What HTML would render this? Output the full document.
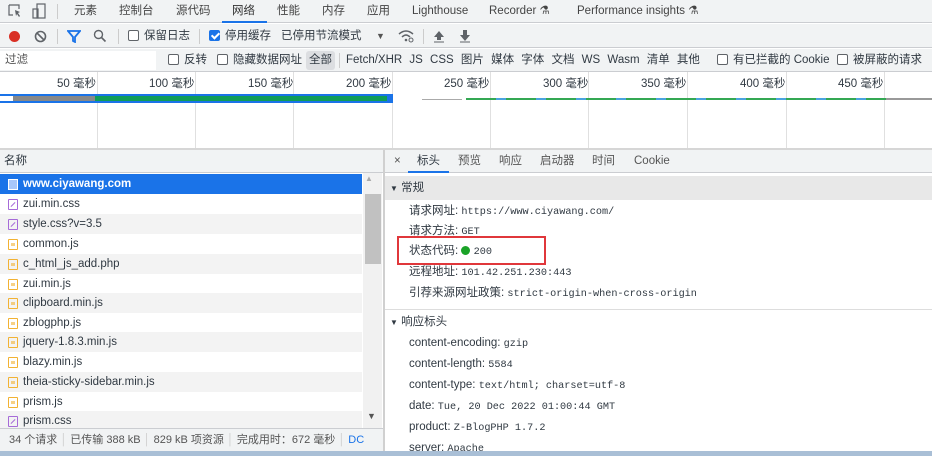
<!DOCTYPE html>
<html><head><meta charset="utf-8"><style>
*{box-sizing:border-box;margin:0;padding:0}
body{width:932px;height:456px;overflow:hidden;background:#fff;font-family:"Liberation Sans","Noto Sans CJK SC",sans-serif;font-size:11.5px;line-height:15px;color:#303942;position:relative}
.a{position:absolute;white-space:nowrap}
.mono{font-family:"Liberation Mono","Noto Sans CJK SC",monospace;font-size:10.2px}
.cb{display:inline-block;width:11px;height:11px;border:1px solid #5f6368;border-radius:2px;vertical-align:-2px;margin-right:5px;background:#fff}
.cbk{background:#1a73e8;border-color:#1a73e8;position:relative}
.cbk:after{content:"";position:absolute;left:3px;top:0px;width:3px;height:6px;border:solid #fff;border-width:0 2px 2px 0;transform:rotate(45deg)}
.row{position:absolute;left:0;width:362px;height:20px;line-height:20px;padding-left:23px;font-size:11.5px}
.ic{position:absolute;left:8px;top:5px;width:10px;height:11px;border:1px solid #f2b233;border-radius:1px}
.ic.css{border-color:#a66bd8}
.ic.css:after{content:"";position:absolute;left:1px;top:4px;width:6px;height:1px;background:#a66bd8;transform:rotate(-45deg)}
.ic.js:after{content:"";position:absolute;left:2px;top:3px;width:4px;height:3px;background:#f2b233;opacity:.6}
.vl{position:absolute;top:72px;height:78px;width:1px;background:#e0e0e0}
</style></head><body>
<div class="a" style="left:0;top:0;width:932px;height:23px;background:#f1f3f4;border-bottom:1px solid #cbcdd1"></div>
<svg class="a" style="left:8px;top:4px" width="14" height="14" viewBox="0 0 14 14"><path d="M1 1h10v4M1 1v10h4" fill="none" stroke="#5f6368" stroke-width="1.2"/><path d="M7 6l5 2-2 1 2 3-1 1-2-3-1 2z" fill="#5f6368"/></svg>
<svg class="a" style="left:32px;top:3px" width="14" height="16" viewBox="0 0 14 16"><rect x="5" y="1" width="8" height="14" fill="none" stroke="#5f6368" stroke-width="1.2"/><rect x="1" y="6" width="5" height="9" fill="none" stroke="#5f6368" stroke-width="1.2"/></svg>
<div class="a" style="left:57px;top:4px;width:1px;height:15px;background:#ccc"></div>
<div class="a" style="left:74px;top:4px;color:#444">元素</div>
<div class="a" style="left:119px;top:4px;color:#444">控制台</div>
<div class="a" style="left:176px;top:4px;color:#444">源代码</div>
<div class="a" style="left:232px;top:4px;color:#333">网络</div>
<div class="a" style="left:222px;top:21px;width:45px;height:2px;background:#1a73e8"></div>
<div class="a" style="left:277px;top:4px;color:#444">性能</div>
<div class="a" style="left:322px;top:4px;color:#444">内存</div>
<div class="a" style="left:367px;top:4px;color:#444">应用</div>
<div class="a" style="left:412px;top:4px;color:#444">Lighthouse</div>
<div class="a" style="left:489px;top:4px;color:#444">Recorder ⚗</div>
<div class="a" style="left:577px;top:4px;color:#444">Performance insights ⚗</div>
<div class="a" style="left:0;top:24px;width:932px;height:24px;background:#f1f3f4;border-bottom:1px solid #cbcdd1"></div>
<div class="a" style="left:9px;top:31px;width:11px;height:11px;border-radius:50%;background:#d93025"></div>
<svg class="a" style="left:34px;top:30px" width="13" height="13"><circle cx="6.5" cy="6.5" r="5" fill="none" stroke="#5f6368" stroke-width="1.6"/><path d="M3 3l7 7" stroke="#5f6368" stroke-width="1.6"/></svg>
<div class="a" style="left:57px;top:29px;width:1px;height:15px;background:#ccc"></div>
<svg class="a" style="left:67px;top:30px" width="14" height="13"><path d="M1 1h12l-5 6v5l-2-1v-4z" fill="none" stroke="#1a73e8" stroke-width="1.8"/></svg>
<svg class="a" style="left:93px;top:29px" width="14" height="14"><circle cx="5.5" cy="5.5" r="4" fill="none" stroke="#5f6368" stroke-width="1.4"/><path d="M8.5 8.5l4 4" stroke="#5f6368" stroke-width="1.6"/></svg>
<div class="a" style="left:118px;top:29px;width:1px;height:15px;background:#ccc"></div>
<div class="a" style="left:128px;top:29px"><span class="cb"></span>保留日志</div>
<div class="a" style="left:199px;top:29px;width:1px;height:15px;background:#ccc"></div>
<div class="a" style="left:209px;top:29px"><span class="cb cbk"></span>停用缓存</div>
<div class="a" style="left:281px;top:29px">已停用节流模式</div>
<div class="a" style="left:376px;top:29px;font-size:9px;color:#555">▼</div>
<svg class="a" style="left:397px;top:29px" width="18" height="14"><path d="M2 5q7-6 14 0M5 8q4-4 8 0" fill="none" stroke="#5f6368" stroke-width="1.5"/><circle cx="9" cy="11" r="1.3" fill="#5f6368"/><circle cx="14" cy="11" r="2" fill="none" stroke="#5f6368"/></svg>
<div class="a" style="left:423px;top:29px;width:1px;height:15px;background:#ccc"></div>
<svg class="a" style="left:433px;top:29px" width="12" height="14"><path d="M6 2l5 6H8v3H4V8H1z" fill="#5f6368"/><path d="M1 13h10" stroke="#5f6368"/></svg>
<svg class="a" style="left:459px;top:29px" width="12" height="14"><path d="M4 1h4v5h3l-5 6-5-6h3z" fill="#5f6368"/><path d="M1 13h10" stroke="#5f6368"/></svg>
<div class="a" style="left:0;top:49px;width:932px;height:23px;background:#f1f3f4;border-bottom:1px solid #cbcdd1"></div>
<div class="a" style="left:0;top:51px;width:156px;height:19px;background:#fff"></div>
<div class="a" style="left:5px;top:53px;color:#555">过滤</div>
<div class="a" style="left:168px;top:53px"><span class="cb"></span>反转</div>
<div class="a" style="left:217px;top:53px"><span class="cb"></span>隐藏数据网址</div>
<div class="a" style="left:306px;top:51px;width:29px;height:19px;background:#dcdee1;border-radius:3px"></div>
<div class="a" style="left:309px;top:53px">全部</div>
<div class="a" style="left:339px;top:53px;width:1px;height:15px;background:#ccc"></div>
<div class="a" style="left:346px;top:53px;word-spacing:4px">Fetch/XHR JS CSS 图片 媒体 字体 文档 WS Wasm 清单 其他</div>
<div class="a" style="left:717px;top:53px"><span class="cb"></span>有已拦截的 Cookie</div>
<div class="a" style="left:837px;top:53px"><span class="cb"></span>被屏蔽的请求</div>
<div class="vl" style="left:97px"></div><div class="vl" style="left:195px"></div><div class="vl" style="left:293px"></div><div class="vl" style="left:392px"></div><div class="vl" style="left:490px"></div><div class="vl" style="left:588px"></div><div class="vl" style="left:687px"></div><div class="vl" style="left:786px"></div><div class="vl" style="left:884px"></div>
<div class="a" style="left:57px;top:77px">50 毫秒</div>
<div class="a" style="left:149px;top:77px">100 毫秒</div>
<div class="a" style="left:248px;top:77px">150 毫秒</div>
<div class="a" style="left:346px;top:77px">200 毫秒</div>
<div class="a" style="left:444px;top:77px">250 毫秒</div>
<div class="a" style="left:543px;top:77px">300 毫秒</div>
<div class="a" style="left:641px;top:77px">350 毫秒</div>
<div class="a" style="left:740px;top:77px">400 毫秒</div>
<div class="a" style="left:838px;top:77px">450 毫秒</div>
<div class="a" style="left:0;top:94px;width:393px;height:9px;background:#1a73e8"></div>
<div class="a" style="left:0;top:96px;width:13px;height:5px;background:#fff"></div>
<div class="a" style="left:13px;top:96px;width:82px;height:5px;background:#888"></div>
<div class="a" style="left:95px;top:96px;width:292px;height:5px;background:#0f9d58"></div>
<div class="a" style="left:422px;top:99px;width:40px;height:1px;background:#aaa"></div>
<div class="a" style="left:466px;top:98px;width:420px;height:2px;background:repeating-linear-gradient(90deg,#34a853 0 30px,#4aa3df 30px 40px)"></div>
<div class="a" style="left:886px;top:98px;width:46px;height:2px;background:#999"></div>
<div class="a" style="left:0;top:148px;width:932px;height:2px;background:#d6d6d6"></div>
<div class="a" style="left:0;top:150px;width:383px;height:23px;background:#f1f3f4;border-bottom:1px solid #cbcdd1"></div>
<div class="a" style="left:4px;top:154px">名称</div>
<div class="row" style="top:174px;background:#1a73e8;color:#fff;font-weight:bold"><span style="position:absolute;left:8px;top:5px;width:10px;height:11px;border:1px solid #fff;background:#a8c7fa"></span>www.ciyawang.com</div>
<div class="row" style="top:194px"><span class="ic css"></span>zui.min.css</div>
<div class="row" style="top:214px;background:#f3f3f3"><span class="ic css"></span>style.css?v=3.5</div>
<div class="row" style="top:234px"><span class="ic js"></span>common.js</div>
<div class="row" style="top:254px;background:#f3f3f3"><span class="ic js"></span>c_html_js_add.php</div>
<div class="row" style="top:274px"><span class="ic js"></span>zui.min.js</div>
<div class="row" style="top:293px;background:#f3f3f3"><span class="ic js"></span>clipboard.min.js</div>
<div class="row" style="top:313px"><span class="ic js"></span>zblogphp.js</div>
<div class="row" style="top:332px;background:#f3f3f3"><span class="ic js"></span>jquery-1.8.3.min.js</div>
<div class="row" style="top:352px"><span class="ic js"></span>blazy.min.js</div>
<div class="row" style="top:372px;background:#f3f3f3"><span class="ic js"></span>theia-sticky-sidebar.min.js</div>
<div class="row" style="top:392px"><span class="ic js"></span>prism.js</div>
<div class="row" style="top:411px;background:#f3f3f3"><span class="ic css"></span>prism.css</div>
<div class="a" style="left:363px;top:173px;width:19px;height:255px;background:#f1f1f1"></div>
<div class="a" style="left:365px;top:171px;font-size:8px;color:#aaa">▲</div>
<div class="a" style="left:365px;top:194px;width:16px;height:70px;background:#c1c1c1"></div>
<div class="a" style="left:367px;top:409px;font-size:9px;color:#555">▼</div>
<div class="a" style="left:0;top:428px;width:383px;height:23px;background:#f1f3f4;border-top:1px solid #cbcdd1"></div>
<div class="a" style="left:9px;top:433px;color:#555;font-size:11px">34 个请求 <span style="color:#ccc">│</span> 已传输 388 kB <span style="color:#ccc">│</span> 829 kB 项资源 <span style="color:#ccc">│</span> 完成用时：672 毫秒 <span style="color:#ccc">│</span> <span style="color:#1a73e8">DC</span></div>
<div class="a" style="left:383px;top:150px;width:2px;height:306px;background:#d0d0d0"></div>
<div class="a" style="left:385px;top:150px;width:547px;height:23px;background:#f1f3f4;border-bottom:1px solid #cbcdd1"></div>
<div class="a" style="left:394px;top:154px;color:#555">×</div>
<div class="a" style="left:417px;top:154px">标头</div>
<div class="a" style="left:408px;top:171px;width:41px;height:2px;background:#1a73e8"></div>
<div class="a" style="left:458px;top:154px;color:#555">预览</div>
<div class="a" style="left:499px;top:154px;color:#555">响应</div>
<div class="a" style="left:540px;top:154px;color:#555">启动器</div>
<div class="a" style="left:592px;top:154px;color:#555">时间</div>
<div class="a" style="left:634px;top:154px;color:#555">Cookie</div>
<div class="a" style="left:385px;top:176px;width:547px;height:24px;background:#e8e8e8"></div>
<div class="a" style="left:390px;top:181px"><span style="font-size:8px">▼</span> 常规</div>
<div class="a" style="left:409px;top:204px">请求网址: <span class="mono">https://www.ciyawang.com/</span></div>
<div class="a" style="left:409px;top:224px">请求方法: <span class="mono">GET</span></div>
<div class="a" style="left:409px;top:244px">状态代码: <span style="display:inline-block;width:9px;height:9px;border-radius:50%;background:#1aa328;vertical-align:-1px"></span> <span class="mono">200</span></div>
<div class="a" style="left:397px;top:236px;width:149px;height:29px;border:2px solid #e0373b"></div>
<div class="a" style="left:409px;top:265px">远程地址: <span class="mono">101.42.251.230:443</span></div>
<div class="a" style="left:409px;top:286px">引荐来源网址政策: <span class="mono">strict-origin-when-cross-origin</span></div>
<div class="a" style="left:385px;top:309px;width:547px;height:1px;background:#ddd"></div>
<div class="a" style="left:390px;top:315px"><span style="font-size:8px">▼</span> 响应标头</div>
<div class="a" style="left:409px;top:336px">content-encoding: <span class="mono">gzip</span></div>
<div class="a" style="left:409px;top:357px">content-length: <span class="mono">5584</span></div>
<div class="a" style="left:409px;top:378px">content-type: <span class="mono">text/html; charset=utf-8</span></div>
<div class="a" style="left:409px;top:399px">date: <span class="mono">Tue, 20 Dec 2022 01:00:44 GMT</span></div>
<div class="a" style="left:409px;top:420px">product: <span class="mono">Z-BlogPHP 1.7.2</span></div>
<div class="a" style="left:409px;top:441px">server: <span class="mono">Apache</span></div>
<div class="a" style="left:0;top:451px;width:932px;height:5px;background:#a9bfd6"></div>
</body></html>
